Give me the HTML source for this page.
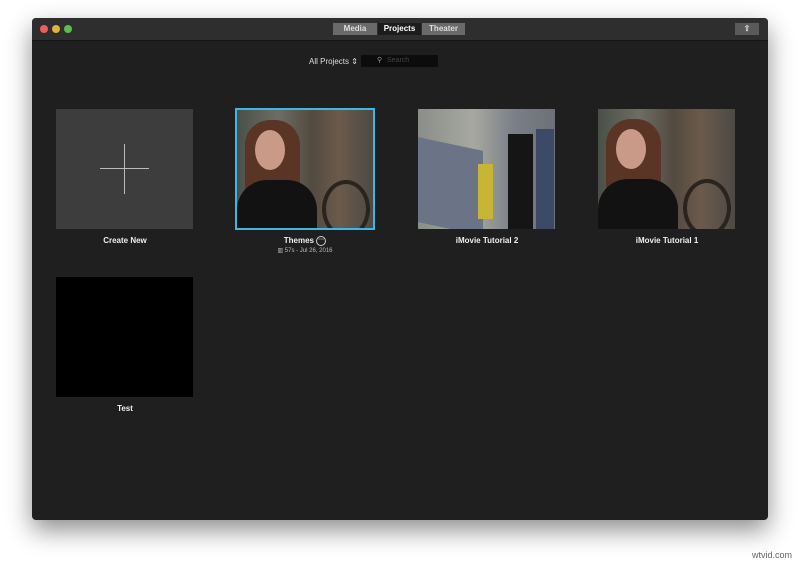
<!DOCTYPE html>
<html><head><style>
body{margin:0;width:800px;height:566px;background:#fff;position:relative;overflow:hidden;font-family:"Liberation Sans",sans-serif}
.win{position:absolute;left:32px;top:18px;width:736px;height:502px;background:#1f1f1f;box-shadow:0 10px 25px rgba(0,0,0,.45);border-radius:4px;overflow:hidden}
.tb{position:absolute;left:0;top:0;right:0;height:22px;background:#2e2e2e;border-bottom:1px solid #141414}
.dot{position:absolute;top:7px;width:8px;height:8px;border-radius:50%}
.seg{position:absolute;top:5px;height:12px;font-size:8px;color:#ddd;text-align:center;line-height:12px;font-weight:bold}
.t{position:absolute;width:137px;height:120px;overflow:hidden}
.lab{position:absolute;font-size:8px;font-weight:bold;color:#eee;text-align:center;width:160px}
.girl{background:linear-gradient(90deg,#4a5048 0,#6d6e63 30%,#534a40 55%,#6b5a4b 75%,#4c4a44 100%)}
</style></head><body>
<div class="win">
 <div class="tb">
  <div class="dot" style="left:8px;background:#ec5f56"></div>
  <div class="dot" style="left:20px;background:#e0b23a"></div>
  <div class="dot" style="left:32px;background:#58c048"></div>
  <div class="seg" style="left:301px;width:44px;background:#6a6a6a">Media</div>
  <div class="seg" style="left:346px;width:43px;background:#1c1c1c;color:#fff">Projects</div>
  <div class="seg" style="left:390px;width:43px;background:#6a6a6a">Theater</div>
  <div class="seg" style="left:703px;width:24px;background:#5a5a5a;top:5px">⇧</div>
 </div>
 <div style="position:absolute;left:277px;top:39px;font-size:8px;color:#ddd">All Projects ⇕</div>
 <div style="position:absolute;left:329px;top:37px;width:77px;height:12px;background:#0c0c0c;font-size:7px;color:#444;line-height:12px;text-indent:26px">Search<span style="position:absolute;left:-10px;top:0;color:#999">⚲</span></div>

 <div class="t" style="left:24px;top:91px;background:#3d3d3d"><div style="position:absolute;left:44px;top:59px;width:49px;height:1px;background:#bbb"></div><div style="position:absolute;left:68px;top:35px;width:1px;height:50px;background:#bbb"></div></div>
 <div class="lab" style="left:13px;top:218px">Create New</div>

 <div class="t girl" style="left:203px;top:90px;width:136px;height:118px;border:2px solid #3fb6e6">
  <div style="position:absolute;left:8px;top:10px;width:55px;height:95px;border-radius:25px 25px 5px 5px;background:#5a3424"></div>
  <div style="position:absolute;left:18px;top:20px;width:30px;height:40px;border-radius:50%;background:#c99a88"></div>
  <div style="position:absolute;left:0;top:70px;width:80px;height:50px;border-radius:30px 30px 0 0;background:#121212"></div>
  <div style="position:absolute;left:85px;top:70px;width:40px;height:50px;border-radius:50%;border:4px solid #2a231e"></div>
 </div>
 <div class="lab" style="left:193px;top:218px">Themes <span style="display:inline-block;width:8px;height:8px;border:1px solid #ccc;border-radius:50%;font-size:6px;line-height:6px;vertical-align:middle">···</span></div>
 <div class="lab" style="left:193px;top:229px;font-size:6px;color:#bbb;font-weight:normal">▥ 57s - Jul 26, 2016</div>

 <div class="t" style="left:386px;top:91px;background:linear-gradient(90deg,#8a8e88 0,#a7a9a0 40%,#7a7f88 70%,#6d7076 100%)">
  <div style="position:absolute;left:0;top:35px;width:65px;height:85px;background:#6b7486;transform:skewY(12deg)"></div>
  <div style="position:absolute;left:60px;top:55px;width:15px;height:55px;background:#c7b634"></div>
  <div style="position:absolute;left:90px;top:25px;width:25px;height:95px;background:#151515"></div>
  <div style="position:absolute;left:118px;top:20px;width:18px;height:100px;background:#3c4a66"></div>
 </div>
 <div class="lab" style="left:375px;top:218px">iMovie Tutorial 2</div>

 <div class="t girl" style="left:566px;top:91px">
  <div style="position:absolute;left:8px;top:10px;width:55px;height:95px;border-radius:25px 25px 5px 5px;background:#5a3424"></div>
  <div style="position:absolute;left:18px;top:20px;width:30px;height:40px;border-radius:50%;background:#c99a88"></div>
  <div style="position:absolute;left:0;top:70px;width:80px;height:50px;border-radius:30px 30px 0 0;background:#121212"></div>
  <div style="position:absolute;left:85px;top:70px;width:40px;height:50px;border-radius:50%;border:4px solid #2a231e"></div>
 </div>
 <div class="lab" style="left:555px;top:218px">iMovie Tutorial 1</div>

 <div class="t" style="left:24px;top:259px;background:#000"></div>
 <div class="lab" style="left:13px;top:386px">Test</div>
</div>
<div style="position:absolute;right:8px;bottom:6px;font-size:9px;color:#666">wtvid.com</div>
</body></html>
